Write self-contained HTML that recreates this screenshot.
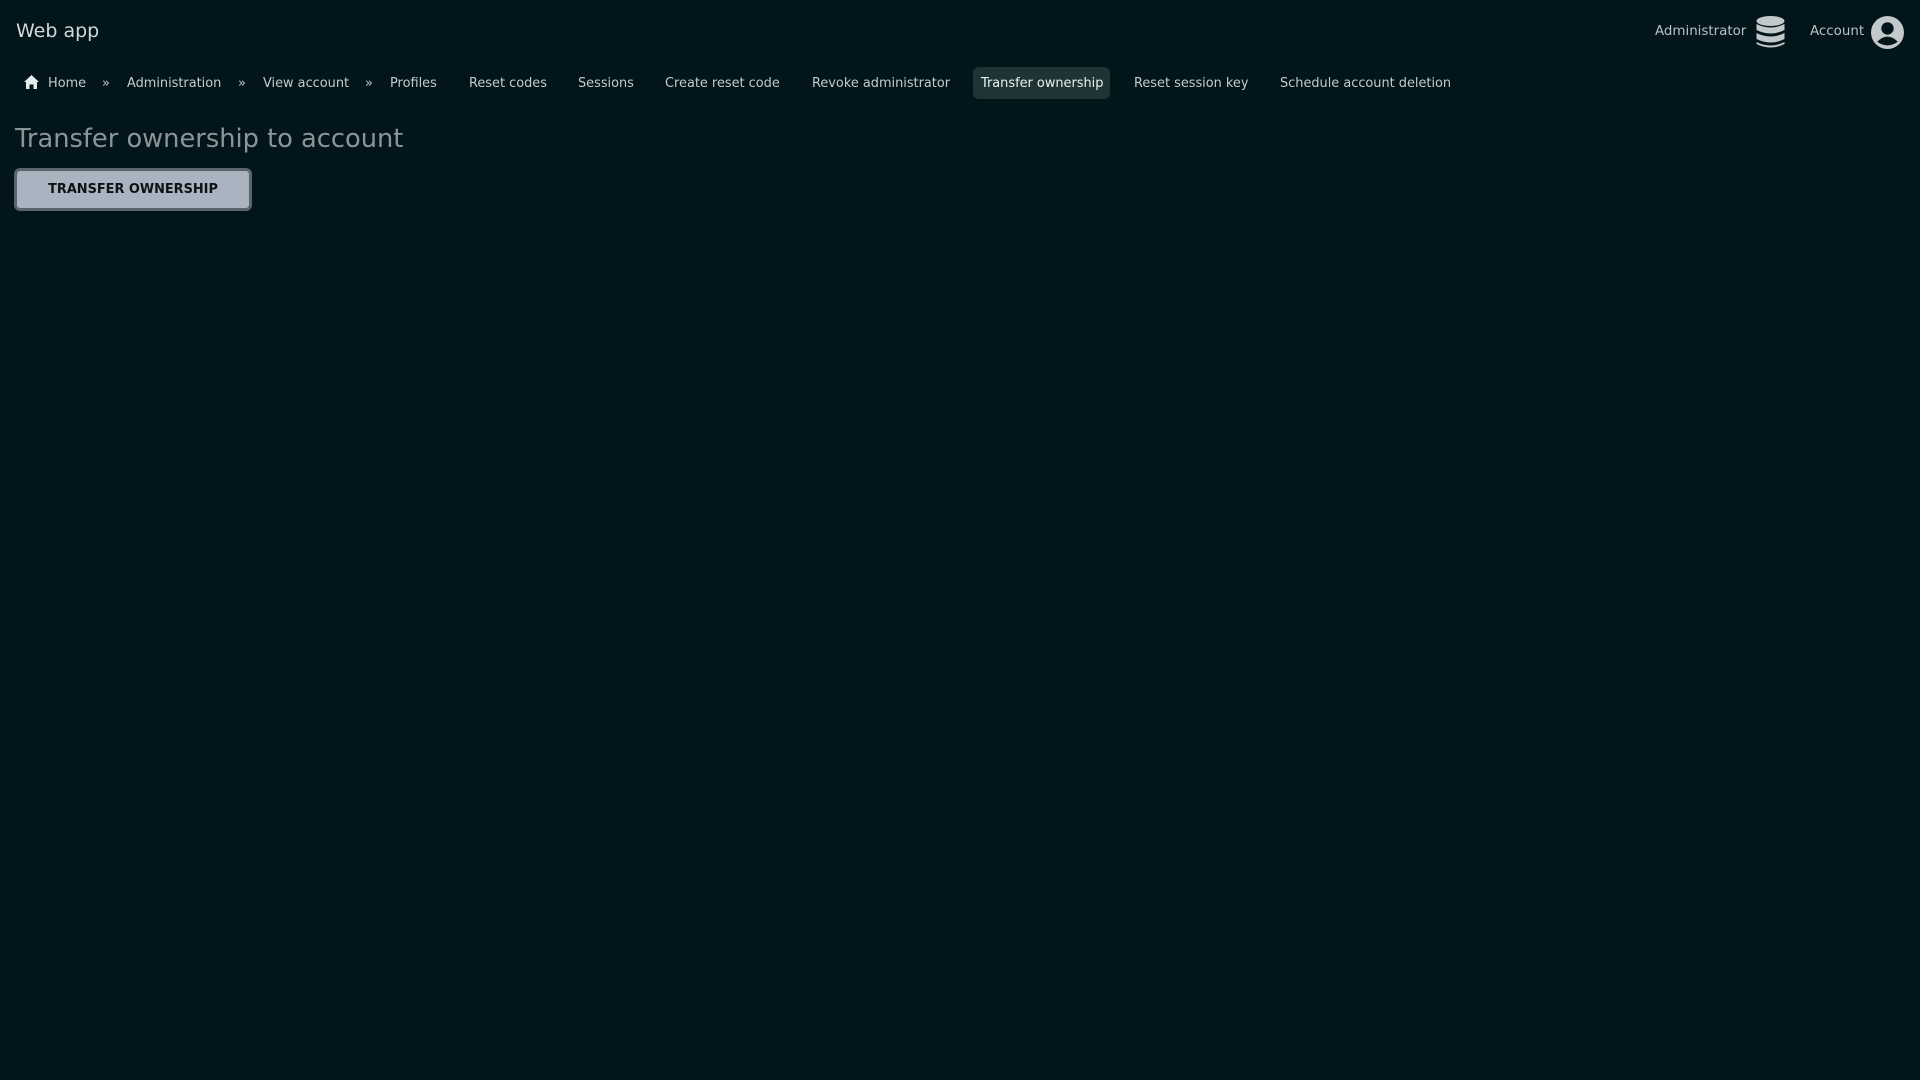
<!DOCTYPE html>
<html><head><meta charset="utf-8"><style>
html,body{margin:0;padding:0;background:#02151b;width:1920px;height:1080px;overflow:hidden;font-family:"DejaVu Sans","Liberation Sans",sans-serif;color:#c9cfd1}
.a{position:absolute;white-space:nowrap}
.nav{font-size:12.9px;top:76px;color:#c5cbcd}
</style></head><body>
<div class="a" style="left:16px;top:20px;font-size:19px;color:#d3d8da">Web app</div>
<div class="a" style="left:1655px;top:24px;font-size:13.4px;color:#b9c0c3">Administrator</div>
<svg class="a" style="left:1756px;top:16px" width="29" height="33" viewBox="0 0 29 33"><g fill="#c3c8ca"><ellipse cx="14.5" cy="5" rx="14" ry="5"/><path d="M0.5 8 Q14.5 15 28.5 8 V14 Q14.5 21 0.5 14Z"/><path d="M0.5 17 Q14.5 24 28.5 17 V23 Q14.5 30 0.5 23Z"/><path d="M0.5 26 Q14.5 33 28.5 26 V28 Q14.5 35 0.5 28Z"/></g></svg>
<div class="a" style="left:1810px;top:24px;font-size:13.4px;color:#b9c0c3">Account</div>
<svg class="a" style="left:1871px;top:16px" width="33" height="33" viewBox="0 0 32 32"><circle cx="16" cy="16" r="16" fill="#c3c8ca"/><circle cx="16" cy="12" r="6" fill="#02151b"/><path d="M6 25 Q16 15 26 25 Q16 32 6 25Z" fill="#02151b"/></svg>
<svg class="a" style="left:24px;top:75px" width="15" height="14" viewBox="0 0 15 14"><path d="M7.5 0 L15 7 H13 V14 H9.5 V9.5 H5.5 V14 H2 V7 H0Z" fill="#e6eaeb"/></svg>
<div class="a nav" style="left:48px">Home</div>
<div class="a nav" style="left:102px">»</div>
<div class="a nav" style="left:127px">Administration</div>
<div class="a nav" style="left:238px">»</div>
<div class="a nav" style="left:263px">View account</div>
<div class="a nav" style="left:365px">»</div>
<div class="a nav" style="left:390px">Profiles</div>
<div class="a nav" style="left:469px">Reset codes</div>
<div class="a nav" style="left:578px">Sessions</div>
<div class="a nav" style="left:665px">Create reset code</div>
<div class="a nav" style="left:812px">Revoke administrator</div>
<div class="a" style="left:973px;top:67px;width:137px;height:32px;background:#1f3434;border-radius:6px"></div>
<div class="a nav" style="left:981px;color:#eef1f2">Transfer ownership</div>
<div class="a nav" style="left:1134px">Reset session key</div>
<div class="a nav" style="left:1280px">Schedule account deletion</div>
<div class="a" style="left:15px;top:124px;font-size:25.7px;color:#8b9599">Transfer ownership to account</div>
<div class="a" style="left:14px;top:168px;width:238px;height:43px;box-sizing:border-box;background:#a9b4c0;border:3px solid #5b646c;border-radius:6px;font-size:12.9px;font-weight:bold;color:#0d1214;text-align:center;line-height:38px">TRANSFER OWNERSHIP</div>
</body></html>
